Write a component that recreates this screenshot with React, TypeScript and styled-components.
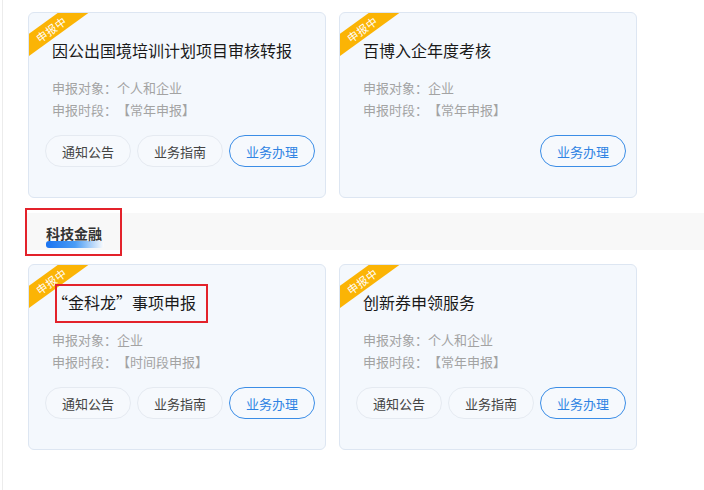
import React from "react";
import styled, { createGlobalStyle } from "styled-components";

const GlobalStyle = createGlobalStyle`
  html, body { margin: 0; padding: 0; background: #fff; }
  body {
    font-family: "Noto Sans CJK SC", "Microsoft YaHei", sans-serif;
    text-spacing-trim: space-all;
  }
  * { box-sizing: border-box; }
`;

const Page = styled.div`
  margin-left: 2px;
  border-left: 1px solid #ececec;
  min-height: 490px;
  padding: 12px 0 0 25px;
`;

const CardGrid = styled.div`
  display: grid;
  grid-template-columns: 298px 298px;
  column-gap: 13px;
`;

const Card = styled.div`
  position: relative;
  overflow: hidden;
  height: 186px;
  border: 1px solid #dde6f2;
  border-radius: 6px;
  background: #f4f8fd;
  padding: 27px 10px 0 23px;
  display: flex;
  flex-direction: column;
`;

const Ribbon = styled.div`
  position: absolute;
  left: -38px;
  top: 7px;
  width: 120px;
  height: 18px;
  background: #fbb405;
  color: #fff;
  font-size: 11px;
  line-height: 18px;
  text-align: center;
  transform: rotate(-36deg);
  letter-spacing: 0.5px;
`;

const Title = styled.div`
  font-size: 16px;
  line-height: 20px;
  color: #1a1a1a;
  white-space: nowrap;
`;

const Info = styled.div`
  margin-top: 17px;
  font-size: 13px;
  line-height: 22px;
  color: #a3a3a3;
`;

const Actions = styled.div`
  margin: 14px 0 0 -6px;
  display: flex;
  justify-content: flex-end;
  gap: 6px;
`;

const Pill = styled.button<{ $primary?: boolean }>`
  flex: 0 0 86px;
  width: 86px;
  height: 32px;
  border-radius: 16px;
  border: 1px solid ${(p) => (p.$primary ? "#3b8de6" : "#e5eaf1")};
  background: #f6f9fd;
  color: ${(p) => (p.$primary ? "#2f83e3" : "#444")};
  font-family: inherit;
  font-size: 13px;
  padding: 0;
  cursor: pointer;
`;

const SectionBar = styled.div`
  position: relative;
  margin: 15px 0 14px -1px;
  height: 37px;
  background: #f8f8f8;
  padding-left: 19px;
  display: flex;
  align-items: center;
`;

const SectionTitle = styled.div`
  position: relative;
  font-size: 14px;
  font-weight: 700;
  color: #333;
  line-height: 20px;
  padding-top: 2px;
  &::after {
    content: "";
    position: absolute;
    left: 0;
    bottom: -5px;
    width: 58px;
    height: 7px;
    border-radius: 3px;
    background: linear-gradient(90deg, #1a73f0 0%, #4a9cf5 50%, rgba(255, 255, 255, 0.6) 100%);
    z-index: 0;
  }
  span {
    position: relative;
    z-index: 1;
  }
`;

const Annotation = styled.div<{ $l: number; $t: number; $w: number; $h: number }>`
  position: absolute;
  left: ${(p) => p.$l}px;
  top: ${(p) => p.$t}px;
  width: ${(p) => p.$w}px;
  height: ${(p) => p.$h}px;
  border: 2px solid #e3222b;
  pointer-events: none;
`;

type Item = {
  title: string;
  target: string;
  period: string;
  full: boolean;
  mark?: boolean;
};

const ItemCard: React.FC<{ item: Item }> = ({ item }) => (
  <Card>
    <Ribbon>申报中</Ribbon>
    <Title>{item.title}</Title>
    <Info>
      <div>申报对象：{item.target}</div>
      <div>申报时段：【{item.period}】</div>
    </Info>
    <Actions>
      {item.full && <Pill>通知公告</Pill>}
      {item.full && <Pill>业务指南</Pill>}
      <Pill $primary>业务办理</Pill>
    </Actions>
    {item.mark && <Annotation $l={26} $t={19} $w={153} $h={39} />}
  </Card>
);

const rowOne: Item[] = [
  { title: "因公出国境培训计划项目审核转报", target: "个人和企业", period: "常年申报", full: true },
  { title: "百博入企年度考核", target: "企业", period: "常年申报", full: false },
];

const rowTwo: Item[] = [
  { title: "“金科龙”事项申报", target: "企业", period: "时间段申报", full: true, mark: true },
  { title: "创新券申领服务", target: "个人和企业", period: "常年申报", full: true },
];

export default function App() {
  return (
    <>
      <GlobalStyle />
      <Page>
        <CardGrid>
          {rowOne.map((it) => (
            <ItemCard key={it.title} item={it} />
          ))}
        </CardGrid>
        <SectionBar>
          <SectionTitle>
            <span>科技金融</span>
          </SectionTitle>
          <Annotation $l={-2} $t={-5} $w={97} $h={48} />
        </SectionBar>
        <CardGrid>
          {rowTwo.map((it) => (
            <ItemCard key={it.title} item={it} />
          ))}
        </CardGrid>
      </Page>
    </>
  );
}
